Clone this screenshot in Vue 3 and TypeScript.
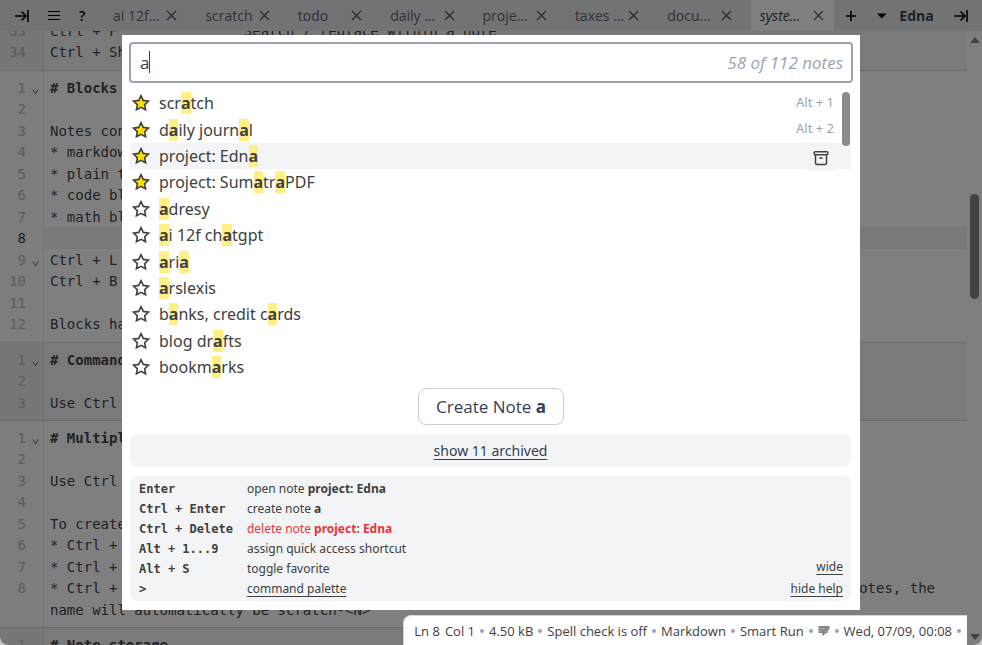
<script setup lang="ts">
import { ref } from 'vue'

interface Line { n: number; text: string; bold?: boolean; fold?: boolean; active?: boolean; rows?: number }
interface Block { alt: boolean; lines: Line[] }
interface Note { name: string; starred: boolean; shortcut?: string }

const query = ref('a')
const selected = 2

const tabs = ['ai 12f...', 'scratch', 'todo', 'daily ...', 'proje...', 'taxes ...', 'docu...', 'syste...']
const activeTab = 7

const blocks: Block[] = [
  {
    alt: true,
    lines: [
      { n: 33, text: 'Ctrl + F               Search / replace within a note' },
      { n: 34, text: 'Ctrl + Sh' },
    ],
  },
  {
    alt: false,
    lines: [
      { n: 1, text: '# Blocks', bold: true, fold: true },
      { n: 2, text: '' },
      { n: 3, text: 'Notes con' },
      { n: 4, text: '* markdow' },
      { n: 5, text: '* plain t' },
      { n: 6, text: '* code bl' },
      { n: 7, text: '* math bl' },
      { n: 8, text: '', active: true },
      { n: 9, text: 'Ctrl + L', fold: true },
      { n: 10, text: 'Ctrl + B' },
      { n: 11, text: '' },
      { n: 12, text: 'Blocks ha' },
    ],
  },
  {
    alt: true,
    lines: [
      { n: 1, text: '# Command', bold: true, fold: true },
      { n: 2, text: '' },
      { n: 3, text: 'Use Ctrl' },
    ],
  },
  {
    alt: false,
    lines: [
      { n: 1, text: '# Multipl', bold: true, fold: true },
      { n: 2, text: '' },
      { n: 3, text: 'Use Ctrl' },
      { n: 4, text: '' },
      { n: 5, text: 'To create' },
      { n: 6, text: '* Ctrl +' },
      { n: 7, text: '* Ctrl +' },
      {
        n: 8,
        rows: 2,
        text: '* Ctrl + Shift + N creates a new scratch note without asking for a name, just like other quick notes, the name will automatically be scratch-<N>',
      },
    ],
  },
  { alt: true, lines: [{ n: 1, text: '# Note storage', bold: true }] },
]

const notes: Note[] = [
  { name: 'scratch', starred: true, shortcut: 'Alt + 1' },
  { name: 'daily journal', starred: true, shortcut: 'Alt + 2' },
  { name: 'project: Edna', starred: true },
  { name: 'project: SumatraPDF', starred: true },
  { name: 'adresy', starred: false },
  { name: 'ai 12f chatgpt', starred: false },
  { name: 'aria', starred: false },
  { name: 'arslexis', starred: false },
  { name: 'banks, credit cards', starred: false },
  { name: 'blog drafts', starred: false },
  { name: 'bookmarks', starred: false },
]

const isHit = (part: string) => part.toLowerCase() === query.value.toLowerCase()

// Splits a name into matching and non-matching runs for highlighting.
function parts(name: string): string[] {
  const q = query.value.toLowerCase()
  if (!q) return [name]
  const out: string[] = []
  let rest = name
  let at = rest.toLowerCase().indexOf(q)
  while (at >= 0) {
    if (at > 0) out.push(rest.slice(0, at))
    out.push(rest.slice(at, at + q.length))
    rest = rest.slice(at + q.length)
    at = rest.toLowerCase().indexOf(q)
  }
  if (rest) out.push(rest)
  return out
}
</script>

<template>
  <div class="page">
    <header class="topbar">
      <div class="tools">
        <button class="icon-btn" aria-label="Collapse tabs">
          <svg width="14" height="14" viewBox="0 0 14 14"><path d="M0 7h11M6.500 2.500L11 7l-4.500 4.500M13 1v12" /></svg>
        </button>
        <button class="icon-btn menu" aria-label="Menu">
          <svg width="14" height="14" viewBox="0 0 14 14"><path d="M1 2.500h12M1 6.500h12M1 10.500h12" /></svg>
        </button>
        <button class="icon-btn help-btn">?</button>
      </div>
      <nav class="tabs">
        <div v-for="(tab, i) in tabs" :key="tab" class="tab" :class="{ current: i === activeTab }">
          <a href="#">{{ tab }}</a>
          <button class="icon-btn close" aria-label="Close tab">
            <svg width="11" height="11" viewBox="0 0 11 11"><path d="M1 1l9 9M10 1l-9 9" /></svg>
          </button>
        </div>
      </nav>
      <div class="right-tools">
        <button class="icon-btn" aria-label="New tab">
          <svg width="12" height="12" viewBox="0 0 12 12"><path d="M6 1v10M1 6h10" /></svg>
        </button>
        <button class="note-menu">
          <svg width="10" height="6" viewBox="0 0 10 6"><path d="M0 0.500h9.500L4.750 5.500z" /></svg>
          <b>Edna</b>
        </button>
        <button class="icon-btn" aria-label="Hide tabs">
          <svg width="14" height="14" viewBox="0 0 14 14"><path d="M0 7h11M6.500 2.500L11 7l-4.500 4.500M13 1v12" /></svg>
        </button>
      </div>
    </header>

    <main class="body">
      <div class="editor">
        <section v-for="(block, b) in blocks" :key="b" class="block" :class="{ alt: block.alt }">
          <div
            v-for="line in block.lines"
            :key="line.n"
            class="line"
            :class="{ active: line.active, double: line.rows === 2 }"
          >
            <span class="num">{{ line.n }}</span>
            <span class="fold"><svg v-if="line.fold" width="7" height="6" viewBox="0 0 7 6"><path d="M1 0.500l2.500 4.500L6 0.500" /></svg></span>
            <span class="code" :class="{ bold: line.bold }">{{ line.text }}</span>
          </div>
        </section>
      </div>
      <div class="scrollbar">
        <svg width="10" height="8" viewBox="0 0 10 8"><path d="M5 1.500L9 6.500H1z" /></svg>
        <div class="track"><div class="thumb"></div></div>
        <svg width="10" height="8" viewBox="0 0 10 8"><path d="M5 6.500L9 1.500H1z" /></svg>
      </div>
    </main>

    <div class="overlay">
      <form class="dialog" @submit.prevent>
        <div class="search">
          <div class="field">
            <input v-model="query" type="text" aria-label="Find note" />
            <i class="caret"></i>
          </div>
          <span class="count">58 of 112 notes</span>
        </div>

        <div class="list-wrap">
          <ul class="list">
            <li v-for="(note, i) in notes" :key="note.name" :class="{ selected: i === selected }">
              <button class="star" :class="{ on: note.starred }" aria-label="Toggle favorite">
                <svg width="18" height="18" viewBox="0 0 18 18">
                  <path d="M9 1.700l2.250 4.700 5.150.7-3.750 3.600.92 5.100L9 13.300l-4.570 2.500.92-5.100L1.600 7.100l5.150-.7z" />
                </svg>
              </button>
              <span class="name"><template v-for="(p, k) in parts(note.name)" :key="k"><mark v-if="isHit(p)">{{ p }}</mark><template v-else>{{ p }}</template></template></span>
              <span v-if="note.shortcut" class="shortcut">{{ note.shortcut }}</span>
              <button v-if="i === selected" class="archive" aria-label="Archive note">
                <svg width="16" height="16" viewBox="0 0 16 16">
                  <rect x="1.200" y="1.700" width="13.600" height="3" rx="1" />
                  <path d="M2.500 4.700v8.300a1.500 1.500 0 0 0 1.500 1.500h8a1.500 1.500 0 0 0 1.500-1.500V4.700M6.300 8h3.400" />
                </svg>
              </button>
            </li>
          </ul>
          <div class="list-thumb"></div>
        </div>

        <button class="create">Create Note <b>a</b></button>
        <div class="archived"><a href="#">show 11 archived</a></div>

        <div class="help">
          <dl>
            <dt>Enter</dt><dd>open note <b>project: Edna</b></dd>
            <dt>Ctrl + Enter</dt><dd>create note <b>a</b></dd>
            <dt>Ctrl + Delete</dt><dd class="danger">delete note <b>project: Edna</b></dd>
            <dt>Alt + 1...9</dt><dd>assign quick access shortcut</dd>
            <dt>Alt + S</dt><dd>toggle favorite</dd>
            <dt>&gt;</dt><dd><a href="#">command palette</a></dd>
          </dl>
          <div class="help-links">
            <a href="#">wide</a>
            <a href="#">hide help</a>
          </div>
        </div>
      </form>
    </div>

    <footer class="status">
      <span>Ln 8</span><span>Col 1</span><i></i>
      <span>4.50 kB</span><i></i>
      <button>Spell check is off</button><i></i>
      <button>Markdown</button><i></i>
      <button>Smart Run</button><i></i>
      <button class="format" aria-label="Format block">
        <svg width="12" height="11" viewBox="0 0 12 11"><path d="M0.500 1h11v3.500L9.500 6l1 1.500L8 8 5.500 10.500H4L4.500 8h-4z" /><path class="scratches" d="M1 3.500h6M1 6h3M11.500 2.500L6.500 7.500" /></svg>
      </button><i></i>
      <span>Wed, 07/09, 00:08</span><i></i>
    </footer>
  </div>
</template>

<style>
body {
  background: #c4c4c4;
}
</style>

<style scoped>
* {
  box-sizing: border-box;
}
.page {
  position: relative;
  display: flex;
  flex-direction: column;
  height: 100vh;
  overflow: hidden;
  border-radius: 0 0 8px 8px;
  font-family: 'Open Sans', 'Noto Sans', sans-serif;
  font-size: 14px;
  color: #404040;
  background: #fff;
}
button {
  padding: 0;
  border: 0;
  background: none;
  font: inherit;
  color: inherit;
}
svg {
  display: block;
  fill: none;
  stroke: currentColor;
}
a {
  color: inherit;
}

.topbar {
  display: flex;
  flex: none;
  height: 31px;
  background: #e5e7eb;
}
.tools {
  display: flex;
  align-items: center;
  gap: 18px;
  width: 104px;
  padding-left: 15px;
}
.icon-btn {
  display: grid;
  place-items: center;
  color: #000;
}
.icon-btn svg {
  stroke-width: 1.6;
}
.menu svg {
  stroke-width: 1;
}
.help-btn {
  font-weight: 600;
}
.tabs {
  display: grid;
  grid-template-columns: repeat(8, 1fr);
  gap: 9px;
  flex: 1;
}
.tab {
  display: flex;
  align-items: center;
  justify-content: space-between;
  padding: 0 10px 0 9px;
  color: #5b6270;
  white-space: nowrap;
}
.tab a {
  text-decoration: none;
}
.tab .close {
  color: #4b5563;
}
.close svg {
  stroke-width: 1.2;
}
.tab.current {
  background: #fff;
  font-style: italic;
  color: #404040;
}
.right-tools {
  display: flex;
  align-items: center;
  justify-content: space-between;
  width: 148px;
  padding: 0 14px 0 11px;
}
.note-menu {
  display: flex;
  align-items: center;
  gap: 12px;
  color: #334155;
}
.note-menu svg {
  fill: #000;
  stroke: none;
}

.body {
  display: flex;
  flex: 1;
  min-height: 0;
}
.editor {
  flex: 1;
  overflow: hidden;
  font-family: 'DejaVu Sans Mono', monospace;
  font-size: 14px;
  line-height: 22px;
}
.block {
  display: grid;
  grid-auto-rows: 21px 22px;
  padding: 6px 0 7px;
  border-bottom: 1px solid #d4d4d4;
  background: linear-gradient(90deg, #fafafa 43px, #ebebeb 43px, #ebebeb 44px, #fff 44px);
}
.block.alt {
  background: linear-gradient(90deg, #efeff1 43px, #e0e0e3 43px, #e0e0e3 44px, #f4f4f6 44px);
}
.block:first-child {
  margin-top: -17px;
}
.line {
  display: grid;
  grid-template-columns: 26px 18px 1fr;
}
.line.double {
  grid-row: span 2;
}
.num {
  color: #b8b8b8;
  text-align: right;
}
.fold {
  display: flex;
  justify-content: center;
  padding: 12px 0 0;
  color: #666;
}
.code {
  padding: 0 6px;
  white-space: pre-wrap;
  overflow: hidden;
  color: #444;
}
.bold {
  font-weight: 700;
}
.active .num {
  color: #404040;
}
.active .code {
  background: #f3f3f3;
}
.scrollbar {
  display: flex;
  flex-direction: column;
  align-items: center;
  width: 15px;
  padding: 5px 0 4px;
  background: #fcfcfc;
}
.scrollbar svg {
  fill: #858585;
  stroke: #858585;
  stroke-linejoin: round;
}
.track {
  flex: 1;
  padding-top: 150px;
}
.thumb {
  width: 9px;
  height: 105px;
  border-radius: 5px;
  background: #858585;
}

.overlay {
  position: absolute;
  inset: 0;
  padding: 35px 122px 0;
  background: rgba(0, 0, 0, 0.5);
}
.dialog {
  display: flex;
  flex-direction: column;
  padding: 7px 7px 9px;
  background: #fff;
  font-family: 'Noto Sans', 'Open Sans', sans-serif;
}
.search {
  display: flex;
  align-items: center;
  height: 41px;
  padding: 0 8px 0 9px;
  border: 2px solid #9ca3af;
  border-radius: 4px;
  font-family: 'Open Sans', 'Noto Sans', sans-serif;
  font-size: 17px;
}
.field {
  position: relative;
  flex: 1;
}
.field input {
  width: 100%;
  padding: 0;
  border: 0;
  outline: 0;
  background: none;
  font: inherit;
  color: #404040;
}
.caret {
  position: absolute;
  left: 9px;
  top: 0;
  width: 1px;
  height: 22px;
  background: #404040;
}
.count {
  font-style: italic;
  color: #9ca3af;
}
.list-wrap {
  position: relative;
  margin: 7px 2px 0 1px;
}
.list {
  display: grid;
  grid-auto-rows: 26px 27px 26px 26px 27px;
  margin: 0;
  padding: 0;
  list-style: none;
  font-size: 16px;
}
.list li {
  display: flex;
  align-items: center;
  padding: 0 17px 0 2px;
}
.list li.selected {
  background: #f3f4f6;
}
.star {
  margin-right: 9px;
}
.star svg {
  stroke-width: 1.6;
}
.star.on svg {
  fill: #fde000;
}
.name {
  flex: 1;
  line-height: 22px;
}
mark {
  display: inline-block;
  background: #fff085;
  color: inherit;
  font-weight: 700;
}
.shortcut {
  padding-bottom: 3px;
  font-size: 13px;
  color: #9ca3af;
}
.archive {
  display: grid;
  place-items: center;
  align-self: flex-start;
  width: 27px;
  height: 28px;
  padding-top: 2px;
  border-radius: 3px;
  background: #f3f4f6;
}
.archive svg {
  stroke-width: 1.5;
}
.list-thumb {
  position: absolute;
  top: 2px;
  right: 1px;
  width: 8px;
  height: 54px;
  border-radius: 4px;
  background: #8b8b8b;
}
.create {
  align-self: center;
  height: 37px;
  margin-top: 8px;
  padding: 0 17px;
  border: 1px solid #ccc;
  border-radius: 8px;
  font-family: 'Open Sans', 'Noto Sans', sans-serif;
  font-size: 17px;
  color: #334155;
}
.archived {
  margin: 9px 2px 0 1px;
  border-radius: 8px;
  background: #f3f4f6;
  font-size: 14px;
  line-height: 33px;
  text-align: center;
  color: #334155;
}
.archived a,
.help a {
  text-underline-offset: 3px;
}
.help {
  display: flex;
  justify-content: space-between;
  margin: 9px 2px 0 1px;
  padding: 3px 8px 2px 9px;
  border-radius: 8px;
  background: #f3f4f6;
  font-size: 12px;
  line-height: 20px;
}
.help dl {
  display: grid;
  grid-template-columns: auto auto;
  column-gap: 14px;
  margin: 0;
}
.help dt {
  font-family: 'DejaVu Sans Mono', monospace;
  font-weight: 700;
}
.help dd {
  margin: 0;
}
.help .danger {
  color: #e7333b;
}
.help-links {
  display: flex;
  flex-direction: column;
  justify-content: flex-end;
  align-items: flex-end;
  gap: 2px;
}

.status {
  position: absolute;
  right: 15px;
  bottom: 0;
  display: flex;
  align-items: center;
  gap: 5px;
  height: 30px;
  padding: 0 6px 0 10px;
  border-top: 1px solid #d1d5db;
  border-left: 1px solid #d1d5db;
  border-top-left-radius: 8px;
  background: #fff;
  font-size: 13px;
  white-space: nowrap;
}
.status i {
  width: 4px;
  height: 4px;
  border-radius: 2px;
  background: #9ca3af;
}
.format svg {
  fill: #858585;
  stroke: none;
}
.format .scratches {
  stroke: #a8a8a8;
}
</style>
